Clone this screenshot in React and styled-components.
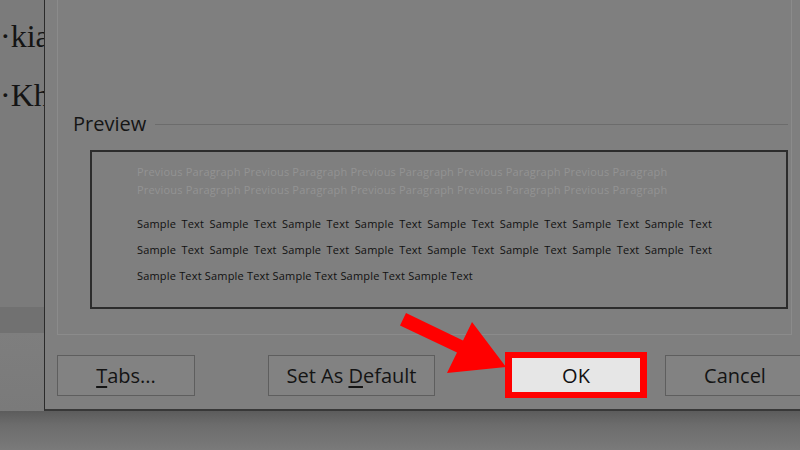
import React from 'react';
import styled, { createGlobalStyle } from 'styled-components';

const GlobalStyle = createGlobalStyle`
  html,
  body {
    margin: 0;
    padding: 0;
    background: #7b7b7b;
  }
`;

const Screen = styled.div`
  position: relative;
  width: 800px;
  height: 450px;
  overflow: hidden;
  display: flex;
  flex-direction: column;
  background: #7b7b7b;
  font-family: 'Open Sans', 'Noto Sans', sans-serif;
`;

const Workspace = styled.div`
  display: flex;
  height: 411px;
  flex-shrink: 0;
`;

const DocumentEdge = styled.div`
  width: 44px;
  flex-shrink: 0;
  display: flex;
  flex-direction: column;
  overflow: hidden;
`;

const DocText = styled.div`
  flex: 1;
  padding-top: 7px;
  font-family: 'Liberation Serif', 'DejaVu Serif', serif;
  font-size: 32px;
  line-height: 59px;
  color: #141414;
  white-space: nowrap;
`;

const StatusBand = styled.div`
  height: 26px;
  background: #717171;
`;

const LowerDoc = styled.div`
  height: 78px;
  background: linear-gradient(#7e7e7e, #7a7a7a);
`;

const Dialog = styled.div`
  flex: 1;
  display: flex;
  flex-direction: column;
  min-width: 0;
  background: #7f7f7f;
  border-left: 1px solid #2b2b2b;
  border-bottom: 2px solid #383838;
  padding: 0 8px 0 12px;
`;

const TabPanel = styled.div`
  height: 335px;
  box-sizing: border-box;
  border: 1px solid #8b8b8b;
  border-top: none;
  padding: 0 3px 25px 15px;
  display: flex;
  flex-direction: column;
  justify-content: flex-end;
`;

const SectionHeader = styled.div`
  display: flex;
  align-items: center;
  gap: 9px;
  height: 24px;
  margin-bottom: 14px;
`;

const SectionLabel = styled.span`
  font-size: 20px;
  line-height: 24px;
  color: #151515;
`;

const SectionRule = styled.div`
  flex: 1;
  height: 1px;
  background: #6c6c6c;
`;

const PreviewBox = styled.div`
  margin-left: 17px;
  border: 2px solid #2c2c2c;
  padding: 11px 0 18px 45px;
  font-size: 11px;
  letter-spacing: 0.18px;
`;

const PreviousLine = styled.div`
  line-height: 18px;
  color: #939393;
  white-space: nowrap;
`;

const SampleBlock = styled.div`
  margin-top: 12px;
`;

const SampleLine = styled.div`
  width: 575px;
  line-height: 26px;
  color: #111;
  white-space: nowrap;
  text-align: left;
  text-align-last: ${(p) => (p.$justify ? 'justify' : 'left')};
`;

const ButtonRow = styled.div`
  display: flex;
  align-items: center;
  height: 46px;
  margin-top: 17px;
`;

const DialogButton = styled.button`
  box-sizing: border-box;
  flex-shrink: 0;
  width: ${(p) => p.$width}px;
  height: 41px;
  margin-left: ${(p) => p.$offset || 0}px;
  padding: 0;
  background: #828282;
  border: 1px solid #5e5e5e;
  font-family: inherit;
  font-size: 20px;
  color: #141414;

  u {
    text-underline-offset: 3px;
    text-decoration-thickness: 2px;
  }
`;

const Highlight = styled.div`
  flex-shrink: 0;
  margin-left: ${(p) => p.$offset}px;
  border: 6px solid #ff0000;
  border-left-width: 7px;
  border-right-width: 7px;
  display: flex;
`;

const PrimaryButton = styled(DialogButton)`
  height: 34px;
  background: #e6e6e6;
  border: none;
  color: #111;
`;

const DropShadow = styled.div`
  flex: 1;
  background: linear-gradient(#5c5c5c, #6c6c6c 35%, #7a7a7a);
`;

const Annotation = styled.svg`
  position: absolute;
  top: 0;
  left: 0;
  pointer-events: none;
`;

const previous = Array(5).fill('Previous Paragraph').join(' ');
const sample = (n) => Array(n).fill('Sample Text').join(' ');

export default function App() {
  return (
    <Screen>
      <GlobalStyle />
      <Workspace>
        <DocumentEdge>
          <DocText>
            <div>·kia</div>
            <div>·Kh</div>
          </DocText>
          <StatusBand />
          <LowerDoc />
        </DocumentEdge>
        <Dialog>
          <TabPanel>
            <SectionHeader>
              <SectionLabel>Preview</SectionLabel>
              <SectionRule />
            </SectionHeader>
            <PreviewBox>
              <PreviousLine>{previous}</PreviousLine>
              <PreviousLine>{previous}</PreviousLine>
              <SampleBlock>
                <SampleLine $justify>{sample(8)}</SampleLine>
                <SampleLine $justify>{sample(8)}</SampleLine>
                <SampleLine>{sample(5)}</SampleLine>
              </SampleBlock>
            </PreviewBox>
          </TabPanel>
          <ButtonRow>
            <DialogButton $width={138}>
              <u>T</u>abs...
            </DialogButton>
            <DialogButton $width={167} $offset={73}>
              Set As <u>D</u>efault
            </DialogButton>
            <Highlight $offset={70}>
              <PrimaryButton $width={128}>OK</PrimaryButton>
            </Highlight>
            <DialogButton $width={140} $offset={18}>
              Cancel
            </DialogButton>
          </ButtonRow>
        </Dialog>
      </Workspace>
      <DropShadow />
      <Annotation width="800" height="450" viewBox="0 0 800 450">
        <polygon
          points="406,313 463,340.5 472,322 506,367 447,373 457,352.6 400,325.6"
          fill="#ff0000"
        />
      </Annotation>
    </Screen>
  );
}
